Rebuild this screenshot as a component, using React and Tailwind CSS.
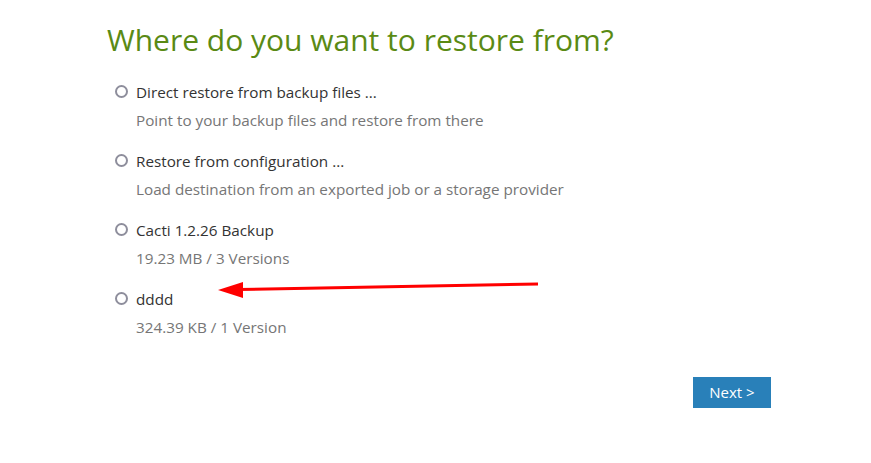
import React, { useState } from 'react';

const options = [
  { id: 'direct', title: 'Direct restore from backup files ...', desc: 'Point to your backup files and restore from there' },
  { id: 'config', title: 'Restore from configuration ...', desc: 'Load destination from an exported job or a storage provider' },
  { id: 'cacti', title: 'Cacti 1.2.26 Backup', desc: '19.23 MB / 3 Versions' },
  { id: 'dddd', title: 'dddd', desc: '324.39 KB / 1 Version' },
];

export default function App() {
  const [selected, setSelected] = useState(null);

  return (
    <div className="relative w-[871px] h-[463px] bg-white font-['Open_Sans',sans-serif] overflow-hidden">
      <div className="pl-[107px] pt-[20px]">
        <h1 className="text-[30px] leading-[40px] text-[#5a8a14] font-normal">Where do you want to restore from?</h1>

        <div className="mt-[20px] pl-[8px] flex flex-col gap-[17px]">
          {options.map(opt => (
            <label key={opt.id} className="flex items-start gap-[8px] cursor-pointer" onClick={() => setSelected(opt.id)}>
              <span className="mt-[5px] w-[13px] h-[13px] rounded-full border-2 border-[#8e8e9c] flex items-center justify-center shrink-0">
                {selected === opt.id && <span className="w-[5px] h-[5px] rounded-full bg-[#555]" />}
              </span>
              <div>
                <div className="text-[15.25px] leading-[24px] text-[#333]">{opt.title}</div>
                <div className="text-[15.25px] leading-[24px] mt-[4px] text-[#767676]">{opt.desc}</div>
              </div>
            </label>
          ))}
        </div>
      </div>

      <div className="flex justify-end pr-[100px] mt-[38px]">
        <button className="w-[78px] h-[31px] bg-[#2980b9] text-white text-[15px]">Next &gt;</button>
      </div>

      {/* annotation arrow */}
      <svg className="absolute left-0 top-0 pointer-events-none" width="871" height="463">
        <line x1="538" y1="284" x2="238" y2="289.5" stroke="#ff0000" strokeWidth="3" />
        <polygon points="218,290 243,282 243,298" fill="#ff0000" />
      </svg>
    </div>
  );
}
